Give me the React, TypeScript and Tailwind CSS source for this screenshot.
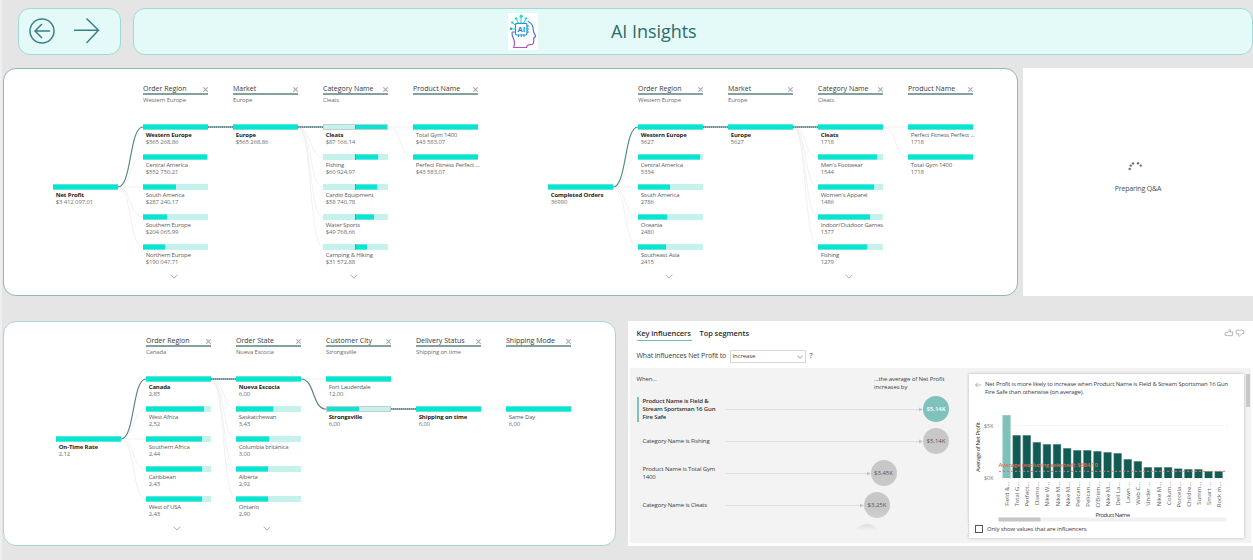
import React from "react";

type Node = { label: string; value: string; fill: number; from?: number; outlined?: boolean; selected?: boolean };
type Column = { title: string; sub: string; nodes: Node[]; more?: boolean; offset?: number };
type TreeData = { root: Node; columns: Column[]; cross: string };

const n = (label: string, value: string, fill = 65, extra: Partial<Node> = {}): Node => ({ label, value, fill, ...extra });

const profit: TreeData = {
  root: n("Net Profit", "$3 412 097,01", 65, { selected: true }),
  cross: "#b9a59e",
  columns: [
    {
      title: "Order Region", sub: "Western Europe", more: true,
      nodes: [
        n("Western Europe", "$565 268,86", 65, { selected: true }),
        n("Central America", "$552 750,21", 64),
        n("South America", "$287 240,17", 33),
        n("Southern Europe", "$204 065,99", 24),
        n("Northern Europe", "$190 047,71", 22),
      ],
    },
    { title: "Market", sub: "Europe", nodes: [n("Europe", "$565 268,86", 65, { selected: true })] },
    {
      title: "Category Name", sub: "Cleats", more: true,
      nodes: [
        n("Cleats", "$87 166,14", 32.5, { from: 32.5, outlined: true, selected: true }),
        n("Fishing", "$60 924,97", 22.5, { from: 32.5 }),
        n("Cardio Equipment", "$58 740,78", 21.7, { from: 32.5 }),
        n("Water Sports", "$49 768,66", 18.5, { from: 32.5 }),
        n("Camping & Hiking", "$31 572,88", 11.7, { from: 32.5 }),
      ],
    },
    { title: "Product Name", sub: "", nodes: [n("Total Gym 1400", "$43 583,07"), n("Perfect Fitness Perfect ...", "$43 583,07")] },
  ],
};

const orders: TreeData = {
  root: n("Completed Orders", "36990", 65, { selected: true }),
  cross: "#a9abc0",
  columns: [
    {
      title: "Order Region", sub: "Western Europe", more: true,
      nodes: [
        n("Western Europe", "5627", 65, { selected: true }),
        n("Central America", "5334", 62),
        n("South America", "2786", 32),
        n("Oceania", "2480", 29),
        n("Southeast Asia", "2415", 28),
      ],
    },
    { title: "Market", sub: "Europe", nodes: [n("Europe", "5627", 65, { selected: true })] },
    {
      title: "Category Name", sub: "Cleats", more: true,
      nodes: [
        n("Cleats", "1718", 65, { selected: true }),
        n("Men's Footwear", "1544", 59),
        n("Women's Apparel", "1486", 56),
        n("Indoor/Outdoor Games", "1377", 52),
        n("Fishing", "1279", 49),
      ],
    },
    { title: "Product Name", sub: "", nodes: [n("Perfect Fitness Perfect ...", "1718"), n("Total Gym 1400", "1718")] },
  ],
};

const onTime: TreeData = {
  root: n("On-Time Rate", "2,12", 65, { selected: true }),
  cross: "#a9abc0",
  columns: [
    {
      title: "Order Region", sub: "Canada", more: true,
      nodes: [
        n("Canada", "2,85", 65, { selected: true }),
        n("West Africa", "2,52", 58),
        n("Southern Africa", "2,44", 56),
        n("Caribbean", "2,43", 55.7),
        n("West of USA", "2,43", 55.7),
      ],
    },
    {
      title: "Order State", sub: "Nueva Escocia", more: true,
      nodes: [
        n("Nueva Escocia", "6,00", 65, { selected: true }),
        n("Saskatchewan", "3,43", 37),
        n("Columbia británica", "3,00", 32.7),
        n("Alberta", "2,92", 32),
        n("Ontario", "2,90", 31.7),
      ],
    },
    {
      title: "Customer City", sub: "Strongsville",
      nodes: [n("Fort Lauderdale", "12,00"), n("Strongsville", "6,00", 32.5, { outlined: true, selected: true })],
    },
    { title: "Delivery Status", sub: "Shipping on time", offset: 1, nodes: [n("Shipping on time", "6,00", 65, { selected: true })] },
    { title: "Shipping Mode", sub: "", offset: 1, nodes: [n("Same Day", "6,00")] },
  ],
};

function TreeNode({ node }: { node: Node }) {
  const from = node.from ?? 0;
  return (
    <div className="flex h-[30px] w-[65px] flex-col">
      <div className={`flex h-[6px] shrink-0 bg-[#c6f2ee] ${node.outlined ? "outline outline-1 -outline-offset-1 outline-[#c3cfce]" : ""}`}>
        <div className={from ? "border-r border-[#4fa5a0]" : ""} style={{ width: from }} />
        <div className="h-[6px] border-y border-[#62e6db] bg-[#02e6d2]" style={{ width: node.fill }} />
      </div>
      <div className={`mt-[2px] h-[7px] whitespace-nowrap pl-[2.7px] text-[6px] leading-[7px] ${node.selected ? "font-bold tracking-[-0.13px] text-[#252423]" : "tracking-[-0.17px] text-[#5c5c5c]"}`}>
        {node.label}
      </div>
      <div className="h-[7px] whitespace-nowrap pl-[2.7px] text-[6px] leading-[7px] tracking-[-0.12px] text-[#6e6e6e]">{node.value}</div>
    </div>
  );
}

function link(x: number, y1: number, y2: number) {
  return y1 === y2 ? `M${x} ${y1}H${x + 25}` : `M${x} ${y1}C${x + 14} ${y1} ${x + 11} ${y2} ${x + 25} ${y2}`;
}

function Tree({ data }: { data: TreeData }) {
  const faint: string[] = [];
  const strong: string[] = [];
  let y = 104;
  data.columns.forEach((col, c) => {
    let next = y;
    col.nodes.forEach((node, i) => {
      const ny = 44 + 30 * (i + (col.offset ?? 0));
      const d = link(65 + 90 * c, y, ny);
      if (node.selected) {
        strong.push(d);
        next = ny;
      } else faint.push(d);
    });
    y = next;
  });
  return (
    <div className="relative flex h-[200px] gap-[25px]">
      <svg className="pointer-events-none absolute inset-0 h-full w-full" fill="none">
        {faint.map((d) => <path key={d} d={d} stroke="#f1f1f1" />)}
        {strong.map((d) =>
          d.includes("C") ? (
            <path key={d} d={d} stroke="#5a8484" strokeWidth="1.2" />
          ) : (
            <g key={d}>
              <path d={d} stroke="#9db5b5" strokeWidth="2" />
              <path d={d} stroke="#5f8484" strokeWidth="1.6" strokeDasharray="1 1" />
            </g>
          ),
        )}
      </svg>
      <div className="pt-[101px]">
        <TreeNode node={data.root} />
      </div>
      {data.columns.map((col) => (
        <div key={col.title} className="flex w-[65px] flex-col">
          <div className="flex h-[12px] items-center justify-between border-b-2 border-[#83a1a1]">
            <span className="mt-[2px] whitespace-nowrap text-[7px] leading-[10px] text-[#383838]">{col.title}</span>
            <svg className="mt-[3px] size-[5px]" viewBox="0 0 5 5" stroke={data.cross} strokeWidth="1.1">
              <path d="M.3 .3l4.400 4.400M4.700 .3l-4.400 4.400" />
            </svg>
          </div>
          <div className="h-[29px] whitespace-nowrap text-[6px] leading-[10px] tracking-[-0.16px] text-[#6e6e6e]">{col.sub}</div>
          <div className={col.offset ? "pt-[30px]" : ""}>
            {col.nodes.map((node) => <TreeNode key={node.label} node={node} />)}
          </div>
          {col.more && (
            <svg className="ml-[27px] h-[5px] w-[8px]" viewBox="0 0 8 5" fill="none" stroke="#aaa">
              <path d="M.5 .7L4 4.200L7.500 .7" />
            </svg>
          )}
        </div>
      ))}
    </div>
  );
}

function Logo() {
  return (
    <svg className="h-[37px] w-[30px] bg-white" viewBox="0 0 30 37" fill="none" strokeLinecap="round" strokeLinejoin="round">
      <defs>
        <linearGradient id="head" x1="0" y1="8" x2="0" y2="35" gradientUnits="userSpaceOnUse">
          <stop offset="0" stopColor="#2a9fe0" />
          <stop offset=".5" stopColor="#4a6fd6" />
          <stop offset="1" stopColor="#c04fc0" />
        </linearGradient>
      </defs>
      <path d="M20 8.200C23.500 10 25.300 13.500 25.300 17C25.300 19.500 27.600 22.500 27.600 23.300C27.600 24.300 25.700 24 25.700 25.500V28.500C25.700 31.500 24 31.700 22.500 31.700C19.500 31.700 19 32.500 18.500 34.500H5.500C7.500 31 6.500 27.500 5 24.500C4 22.500 3.800 21 4.200 19" stroke="url(#head)" strokeWidth="1.2" />
      <rect x="7.500" y="10.300" width="11.500" height="11.700" rx="1.500" stroke="#2191dc" strokeWidth="1.200" />
      <path d="M10.500 22v1.800M13.300 22v1.800M16 22v1.800M19 13h1.800M19 16h1.800M19 19h1.800M7 19H5" stroke="#2191dc" />
      <path d="M13 10V5M10.500 10L8.500 6.500M15.500 10L17.500 6.500M7 12L5 10M7 16H4" stroke="#22cdc5" />
      <g fill="#27dfc5">
        <circle cx="13.200" cy="3.300" r="1.700" />
        <circle cx="8" cy="5.500" r="1.300" />
        <circle cx="18" cy="5.500" r="1.300" />
        <circle cx="4.300" cy="9.500" r="1.200" />
        <circle cx="3" cy="15.800" r="1.300" fill="#22a9d8" />
      </g>
      <text x="13.300" y="19" textAnchor="middle" fill="#1b83d8" className="font-['Open_Sans'] text-[7.5px] font-bold">AI</text>
    </svg>
  );
}

const bars = [
  ["Field &...", 63], ["Total G...", 43], ["Perfect...", 43], ["Diamo...", 36], ["Nike W...", 34], ["Nike M...", 34],
  ["Nike M...", 30], ["Pelican...", 28], ["Pelican...", 28], ["O'Brien...", 27], ["Nike M...", 26], ["Dell La...", 25],
  ["Lawn ...", 19], ["Web C...", 17], ["Under ...", 11], ["Nike M...", 11], ["Colum...", 11], ["Porcela...", 9.7],
  ["Childre...", 9], ["Summ...", 9], ["Smart ...", 7], ["Rock m...", 7],
] as const;

function InfluenceChart() {
  return (
    <svg className="h-[128px] w-[275px] shrink-0 font-['Open_Sans',sans-serif]" viewBox="969 395 275 128">
      <path d="M998 425.500H1227" stroke="#dedede" strokeDasharray="1 3" />
      <path d="M998 478.500H1227" stroke="#dedede" strokeDasharray="1 3" />
      {bars.map(([, h], i) => (
        <g key={i}>
          <rect x={1002.3 + i * 10.1} y={478 - h} width="8.400" height={h} fill={i ? "#7fa8a4" : "#a8d5d0"} />
          <rect x={1003 + i * 10.1} y={478.7 - h} width="7.200" height={h - 0.7} fill={i ? "#125a54" : "#7fc1bb"} />
        </g>
      ))}
      <path d="M999 471.300H1226" stroke="#d9775f" strokeDasharray="2.200 1.800" />
      <text x="998.500" y="467" fill="#e0694a" textLength="99.500" className="text-[6px] font-semibold">Average (excluding selected): $684,10</text>
      <text x="984" y="428" fill="#777" textLength="9.500" className="text-[5.500px]">$5K</text>
      <text x="984" y="480" fill="#777" textLength="9.500" className="text-[5.500px]">$0K</text>
      <text transform="translate(980 472) rotate(-90)" fill="#333" textLength="50" className="text-[6px]">Average of Net Profit</text>
      {bars.map(([label], i) => (
        <text key={i} transform={`translate(${1009 + i * 10.1} 482) rotate(-90)`} textAnchor="end" fill="#5c5c5c" className="text-[6px]">{label}</text>
      ))}
      <text x="1095.500" y="517" fill="#333" textLength="34.500" className="text-[6px]">Product Name</text>
      <rect x="998.500" y="517.500" width="228" height="4" fill="#f1f1f1" />
      <rect x="998.500" y="517.500" width="42" height="4" fill="#c6c6c6" />
    </svg>
  );
}

const influencers = [
  { text: "Product Name is Field & Stream Sportsman 16 Gun Fire Safe", value: "$5,14K", gap: 0, active: true },
  { text: "Category Name is Fishing", value: "$5,14K", gap: 0 },
  { text: "Product Name is Total Gym 1400", value: "$3,45K", gap: 52.5 },
  { text: "Category Name is Cleats", value: "$3,25K", gap: 59 },
];

function KeyInfluencers() {
  return (
    <section className="flex h-[225px] w-[625px] flex-col bg-white text-[#3c3c3c]">
      <div className="flex h-[27px] items-start justify-between pl-[8.5px] pr-[8px] pt-[6px]">
        <div className="flex gap-[8px] text-[7.5px] font-semibold leading-[12px] tracking-[-0.08px] text-[#2e2e2e]">
          <span className="h-[14px] w-[55px] whitespace-nowrap border-b border-[#6dbdb5]">Key influencers</span>
          <span className="whitespace-nowrap">Top segments</span>
        </div>
        <svg className="mt-[2px] h-[8px] w-[21px]" viewBox="0 0 22 9" fill="none" stroke="#999" strokeWidth=".8" strokeLinejoin="round">
          <path d="M.5 4.200H3L5.500 .6L6.500 1.100L5.700 3.300H9L8.500 7.500H3L.5 7Z" />
          <path d="M13 1.500L19 1.200L21.500 2V5L19.500 5.200L16.500 8.200L15.500 7.500L16 5.500H13.200L12.700 3.500Z" />
        </svg>
      </div>
      <div className="flex h-[20px] items-center pl-[8.5px] pb-[3px] text-[7px]">
        <span className="w-[93px] whitespace-nowrap tracking-[-0.15px]">What influences Net Profit to</span>
        <div className="flex h-[13px] w-[76px] items-center justify-between border border-[#d8d8d8] px-[2px] text-[6px] tracking-[-0.1px]">
          <span>Increase</span>
          <svg className="h-[4px] w-[6px]" viewBox="0 0 6 4" fill="none" stroke="#777" strokeWidth=".7"><path d="M.3 .5L3 3.300L5.700 .5" /></svg>
        </div>
        <span className="ml-[4px]">?</span>
      </div>
      <div className="ml-[2px] flex h-[175px] w-[621px] bg-[#f3f3f3]">
        <div className="flex w-[338px] flex-col">
          <div className="flex h-[25px] justify-between pl-[6.5px] pr-[18px] pt-[7px] text-[6px] leading-[8px] tracking-[-0.1px]">
            <span>When...</span>
            <span className="w-[76px] whitespace-nowrap">...the average of Net Profit<br />increases by</span>
          </div>
          <div className="relative h-[140px] overflow-hidden">
            {influencers.map((row) => (
              <div key={row.text} className="flex h-[32px] items-center pl-[6.5px]">
                <div className={`flex h-[25px] w-[79px] shrink-0 items-center border-l-2 pl-[4px] text-[6px] leading-[8px] tracking-[-0.14px] ${row.active ? "border-[#7fc1bb] font-semibold text-[#2e2e2e]" : "border-transparent"}`}>
                  {row.text}
                </div>
                <div className="ml-[10px] h-px flex-1 bg-[#dcdcdc]" />
                <svg className="h-[5px] w-[4px] shrink-0" viewBox="0 0 4 5"><path d="M0 .5L4 2.500L0 4.500Z" fill="#c4c4c4" /></svg>
                <div
                  className={`flex size-[26px] shrink-0 items-center justify-center rounded-full text-[6px] ${row.active ? "bg-[#7fc1bb] font-semibold text-white" : "bg-[#c8c8c8] text-[#555]"}`}
                  style={{ marginRight: 19 + row.gap }}
                >
                  {row.value}
                </div>
              </div>
            ))}
            <div className="ml-[224px] mt-[3px] size-[26px] rounded-full bg-[#c8c8c8]" />
            <div className="absolute inset-x-0 bottom-0 h-[22px] bg-gradient-to-b from-[#f3f3f3]/0 via-[#f3f3f3]/35 via-50% to-[#f3f3f3] to-90%" />
          </div>
        </div>
        <div className="ml-px mt-[6px] flex h-[164px] w-[275px] flex-col bg-white shadow-[0_0_3px_rgba(0,0,0,0.25)]">
          <div className="flex h-[21px] pl-[6px] pt-[6px] text-[6px] leading-[8px] tracking-[-0.17px]">
            <svg className="mt-[2px] h-[6px] w-[6px] shrink-0" viewBox="0 0 6 6" fill="none" stroke="#999" strokeWidth=".7"><path d="M3 .5L.5 3L3 5.500M.5 3H6" /></svg>
            <p className="ml-[4px] whitespace-nowrap">
              Net Profit is more likely to increase when Product Name is Field &amp; Stream Sportsman 16 Gun<br />
              Fire Safe than otherwise (on average).
            </p>
          </div>
          <InfluenceChart />
          <div className="flex h-[15px] items-center gap-[4px] pb-[3px] pl-[6px] text-[6px] tracking-[-0.14px]">
            <span className="size-[8px] border border-[#555]" />
            <span className="whitespace-nowrap">Only show values that are influencers</span>
          </div>
        </div>
        <div className="ml-[2px] mt-[6px] h-[33px] w-[4px] bg-[#c8c8c8]" />
      </div>
    </section>
  );
}

export default function App() {
  return (
    <main className="h-[560px] w-[1253px] overflow-hidden border-l-2 border-[#efefef] bg-[#e5e5e5] font-['Open_Sans','Noto_Sans',sans-serif]">
      <header className="flex h-[68px] gap-[12px] pl-[16px] pt-[8px]">
        <nav className="flex h-[47px] w-[103px] items-center rounded-[12px] border border-[#9fdad4] bg-[#e4faf9] pb-[2px] pl-[10px]">
          <svg className="h-[26px] w-[72px]" viewBox="0 0 72 26" fill="none" stroke="#3d7f89" strokeWidth="1.500">
            <circle cx="13" cy="13" r="12" />
            <path d="M21 13H6M13 6L6 13L13 20" />
            <path d="M45 12.300H69M57.500 0.500L69.500 12.300L57.500 25" />
          </svg>
        </nav>
        <div className="flex h-[47px] w-[1120px] items-center rounded-[12px] border border-[#9fdad4] bg-[#e4faf9] pb-px pl-[374px]">
          <Logo />
          <h1 className="ml-[73px] whitespace-nowrap text-[18px] leading-[24px] tracking-[-0.05px] text-[#2c6b6a]">AI Insights</h1>
        </div>
      </header>
      <div className="flex gap-[5px] pl-px">
        <section className="flex h-[228px] w-[1015px] rounded-[13px] border border-[#8fb9b9] bg-white pl-[49px] pt-[14px]">
          <div className="w-[495px]"><Tree data={profit} /></div>
          <Tree data={orders} />
        </section>
        <section className="flex h-[228px] w-[230px] flex-col items-center bg-white pt-[93px]">
          <svg className="mr-[5px] h-[14px] w-[16px]" viewBox="0 0 16 14" fill="#707070">
            <circle cx="1.700" cy="8" r="1.200" />
            <circle cx="2.800" cy="4.600" r="1.200" />
            <circle cx="5" cy="2.400" r="1.200" />
            <circle cx="10" cy="2.200" r="1.200" />
            <circle cx="12.800" cy="4.600" r="1.200" />
          </svg>
          <p className="mt-[9px] text-[7px] leading-[10px] tracking-[-0.16px] text-[#4c4c4c]">Preparing Q&amp;A</p>
        </section>
      </div>
      <div className="mt-[25px] flex gap-[12px] pl-px">
        <section className="h-[225px] w-[613px] rounded-[13px] border border-[#a5d6d2] bg-white pl-[52px] pt-[13px]">
          <Tree data={onTime} />
        </section>
        <KeyInfluencers />
      </div>
    </main>
  );
}
